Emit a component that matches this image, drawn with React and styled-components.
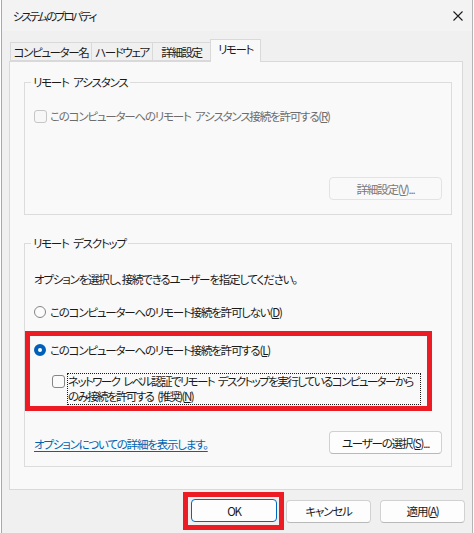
import React from "react";
import styled, { createGlobalStyle } from "styled-components";

const GlobalStyle = createGlobalStyle`
    html, body {
        margin: 0;
        padding: 0;
        background: #ffffff;
    }
    body {
        font-family: "Noto Sans CJK JP", "Noto Sans", sans-serif;
        font-size: 11.5px;
        letter-spacing: -1.2px;
        word-spacing: 3px;
        font-feature-settings: "palt";
        color: #1a1a1a;
    }
`;

const tabs = [
    { label: "コンピューター名", width: 82 },
    { label: "ハードウェア", width: 62 },
    { label: "詳細設定", width: 59 },
    { label: "リモート", width: 51, active: true },
];

export default function App() {
    return (
        <>
            <GlobalStyle />
            <Window>
                <TitleBar>
                    <Title>システムのプロパティ</Title>
                    <CloseIcon viewBox="0 0 10 10">
                        <path d="M0.5 0.5 L9.5 9.5 M9.5 0.5 L0.5 9.5" />
                    </CloseIcon>
                </TitleBar>
                <Body>
                    <TabRow>
                        {tabs.map((t) => (
                            <Tab key={t.label} $w={t.width} $active={t.active}>
                                {t.label}
                            </Tab>
                        ))}
                    </TabRow>
                    <Panel>
                        <Group>
                            <Legend>リモート&nbsp;アシスタンス</Legend>
                            <Row $top={18} $disabled>
                                <CheckBox $disabled />
                                <span>
                                    このコンピューターへのリモート&nbsp;アシスタンス接続を許可する(<u>R</u>)
                                </span>
                            </Row>
                            <Button $disabled $top={53} $right>
                                詳細設定(<u>V</u>)...
                            </Button>
                        </Group>

                        <Group $top={20} $bottom={12}>
                            <Legend>リモート&nbsp;デスクトップ</Legend>
                            <Row $top={20}>
                                オプションを選択し、接続できるユーザーを指定してください。
                            </Row>
                            <Row $top={17}>
                                <Radio />
                                <span>
                                    このコンピューターへのリモート接続を許可しない(<u>D</u>)
                                </span>
                            </Row>
                            <Highlight>
                                <Row>
                                    <Radio $checked />
                                    <span>
                                        このコンピューターへのリモート接続を許可する(<u>L</u>)
                                    </span>
                                </Row>
                                <SubRow>
                                    <CheckBox />
                                    <FocusLabel>
                                        ネットワーク&nbsp;レベル認証でリモート&nbsp;デスクトップを実行しているコンピューターから
                                        <br />
                                        のみ接続を許可する&nbsp;(推奨)(<u>N</u>)
                                    </FocusLabel>
                                </SubRow>
                            </Highlight>
                            <FooterRow>
                                <Link href="#">オプションについての詳細を表示します。</Link>
                                <Button>
                                    ユーザーの選択(<u>S</u>)...
                                </Button>
                            </FooterRow>
                        </Group>
                    </Panel>
                </Body>
                <ButtonBar>
                    <OkMark>
                        <Button $w={86} $focused>
                            OK
                        </Button>
                    </OkMark>
                    <Button $w={85}>キャンセル</Button>
                    <Button $w={85} $left={9}>
                        適用(<u>A</u>)
                    </Button>
                </ButtonBar>
            </Window>
        </>
    );
}

const Window = styled.div`
    box-sizing: border-box;
    width: 472px;
    height: 533px;
    margin-left: 1px;
    background: #f0f0f0;
    border-left: 1px solid #a9a9a9;
    border-right: 1px solid #b4b4b4;
    display: flex;
    flex-direction: column;
`;

const TitleBar = styled.div`
    height: 31px;
    flex-shrink: 0;
    display: flex;
    align-items: center;
    justify-content: space-between;
    padding: 0 9px 0 11px;
    background: #f3f3f3;
    color: #1b1b1b;
`;

const Title = styled.span`
    letter-spacing: -2.2px;
`;

const CloseIcon = styled.svg`
    width: 10px;
    height: 10px;
    path {
        stroke: #1b1b1b;
        stroke-width: 1.1;
        fill: none;
    }
`;

const Body = styled.div`
    padding: 8px 9px 0 7px;
    display: flex;
    flex-direction: column;
`;

const TabRow = styled.div`
    display: flex;
    align-items: flex-end;
    height: 22px;
    padding-left: 1px;
`;

const Tab = styled.div`
    box-sizing: border-box;
    width: ${(p) => p.$w}px;
    height: ${(p) => (p.$active ? 23 : 19)}px;
    margin-bottom: ${(p) => (p.$active ? -1 : 0)}px;
    display: flex;
    align-items: center;
    justify-content: center;
    padding-top: ${(p) => (p.$active ? 0 : 1)}px;
    padding-bottom: ${(p) => (p.$active ? 4 : 0)}px;
    background: ${(p) => (p.$active ? "#f9f9f9" : "#f0f0f0")};
    border: 1px solid #d9d9d9;
    border-bottom: ${(p) => (p.$active ? "none" : "1px solid #d9d9d9")};
    margin-left: -1px;
    position: relative;
    z-index: ${(p) => (p.$active ? 2 : 1)};
    white-space: nowrap;
    letter-spacing: -1.4px;
    &:first-child {
        margin-left: 0;
    }
`;

const Panel = styled.div`
    box-sizing: border-box;
    height: 429px;
    background: #f9f9f9;
    border: 1px solid #d9d9d9;
    padding: 12px 10px 0 14px;
    display: flex;
    flex-direction: column;
`;

const Group = styled.fieldset`
    margin: ${(p) => p.$top || 0}px 0 0 0;
    padding: 0 9px ${(p) => (p.$bottom !== undefined ? p.$bottom : 14)}px 9px;
    border: 1px solid #dcdcdc;
    display: flex;
    flex-direction: column;
    min-width: 0;
`;

const Legend = styled.legend`
    margin-left: -3px;
    padding: 0 2px;
    line-height: 16px;
    color: #1a1a1a;
`;

const Row = styled.div`
    display: flex;
    align-items: center;
    height: 16px;
    line-height: 16px;
    margin-top: ${(p) => p.$top || 0}px;
    color: ${(p) => (p.$disabled ? "#6d6d6d" : "#1a1a1a")};
    white-space: nowrap;
`;

const CheckBox = styled.span`
    box-sizing: border-box;
    width: 13px;
    height: 13px;
    flex-shrink: 0;
    margin-right: 3px;
    border-radius: 3px;
    border: 1px solid ${(p) => (p.$disabled ? "#c6c6c6" : "#858585")};
    background: ${(p) => (p.$disabled ? "#f7f7f7" : "#fbfbfb")};
`;

const Radio = styled.span`
    box-sizing: border-box;
    width: 12px;
    height: 12px;
    flex-shrink: 0;
    margin-right: 4px;
    border-radius: 50%;
    border: ${(p) => (p.$checked ? "4px solid #005fb8" : "1px solid #858585")};
    background: ${(p) => (p.$checked ? "#ffffff" : "#fbfbfb")};
`;

const Highlight = styled.div`
    box-sizing: border-box;
    width: 407px;
    margin: 11px 0 0 -9px;
    padding: 6px 0 1px 4px;
    border: 5px solid #ed1c24;
    display: flex;
    flex-direction: column;
`;

const SubRow = styled.div`
    display: flex;
    align-items: flex-start;
    margin-top: 15px;
    padding-left: 18px;
    & > ${CheckBox} {
        margin-top: 2px;
        margin-right: 2px;
    }
`;

const FocusLabel = styled.div`
    box-sizing: border-box;
    width: 354px;
    border: 1px dotted #1a1a1a;
    line-height: 15px;
    white-space: nowrap;
    letter-spacing: -1.6px;
    color: #1a1a1a;
`;

const FooterRow = styled.div`
    display: flex;
    align-items: center;
    justify-content: space-between;
    margin-top: 20px;
`;

const Link = styled.a`
    color: #0063b1;
    text-decoration: underline;
    text-underline-offset: 2px;
    padding-top: 3px;
`;

const Button = styled.div`
    box-sizing: border-box;
    width: ${(p) => p.$w || 113}px;
    height: 23px;
    flex-shrink: 0;
    margin-top: ${(p) => p.$top || 0}px;
    margin-left: ${(p) => p.$left || 0}px;
    align-self: ${(p) => (p.$right ? "flex-end" : "auto")};
    display: flex;
    align-items: center;
    justify-content: center;
    border-radius: 4px;
    background: ${(p) => (p.$disabled ? "#f9f9f9" : "#fdfdfd")};
    border: 1px solid
        ${(p) => (p.$focused ? "#0067c0" : p.$disabled ? "#e3e3e3" : "#d1d1d1")};
    border-bottom-color: ${(p) =>
        p.$focused ? "#0067c0" : p.$disabled ? "#e3e3e3" : "#b9b9b9"};
    color: ${(p) => (p.$disabled ? "#7a7a7a" : "#1a1a1a")};
    white-space: nowrap;
`;

const ButtonBar = styled.div`
    display: flex;
    justify-content: flex-end;
    align-items: center;
    margin-top: 2px;
    padding-right: 7px;
`;

const OkMark = styled.div`
    box-sizing: border-box;
    border: 5px solid #ed1c24;
    padding: 2px 2px 3px 3px;
    margin-right: 2px;
    display: flex;
`;
